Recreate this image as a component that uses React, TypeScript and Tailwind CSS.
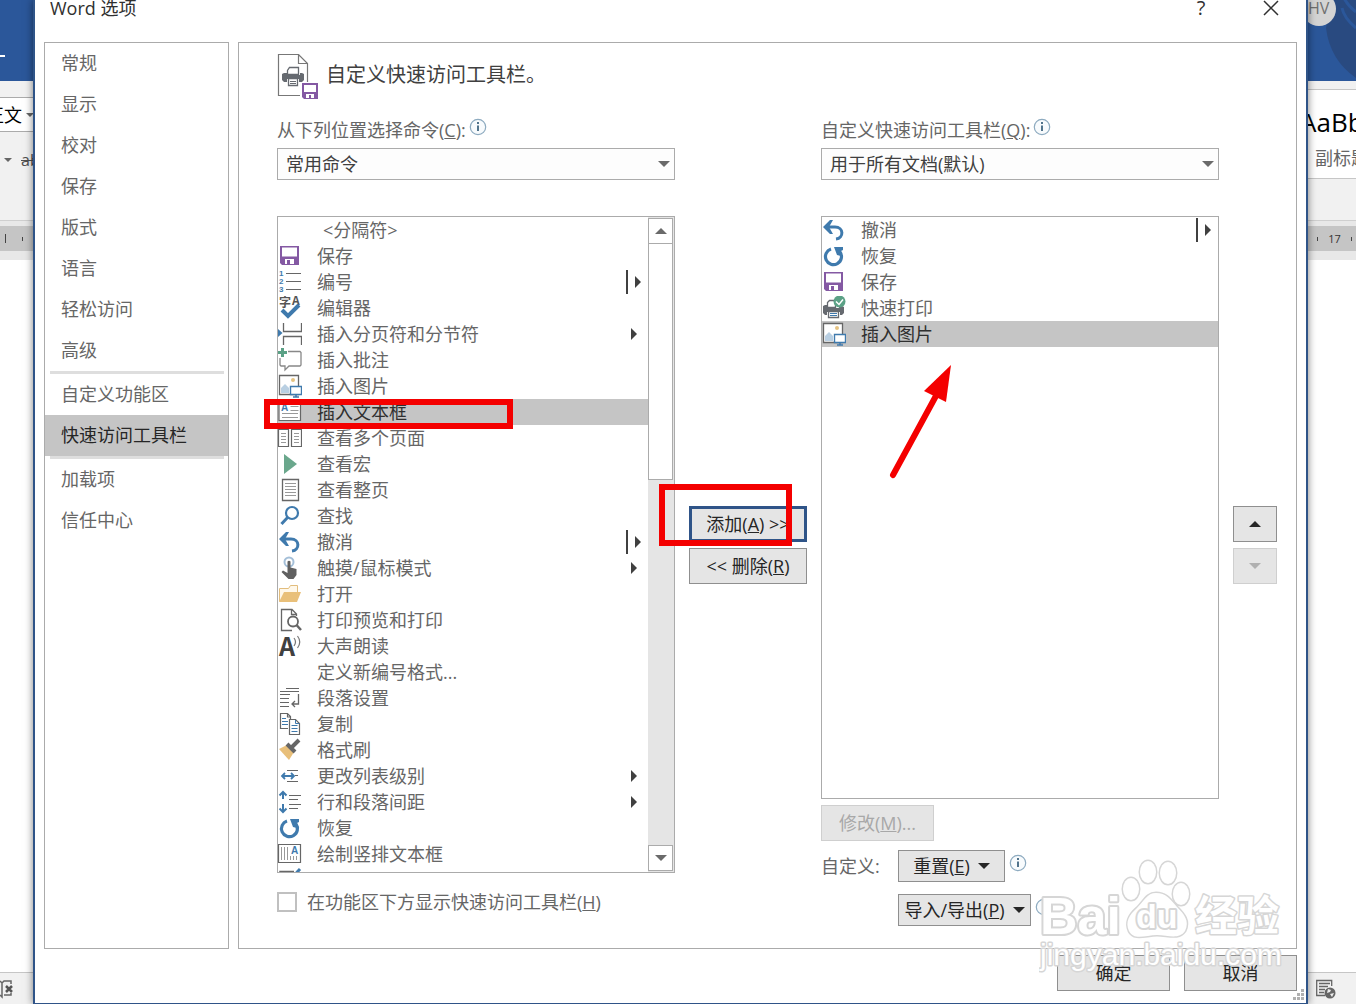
import type { ReactNode } from 'react';

const NAV_GROUPS = [
  ['常规', '显示', '校对', '保存', '版式', '语言', '轻松访问', '高级'],
  ['自定义功能区', '快速访问工具栏'],
  ['加载项', '信任中心'],
];

type Expander = 'split' | 'menu';

interface Command {
  label: string;
  icon?: ReactNode;
  expander?: Expander;
  selected?: boolean;
  separator?: boolean;
}

const GRAY = '#666';
const BLUE = '#3f7aad';

function Icon({ children }: { children?: ReactNode }) {
  return (
    <svg className="w-6 h-6 shrink-0" viewBox="0 0 24 24" fill="none" aria-hidden="true">
      {children}
    </svg>
  );
}

const saveIcon = (
  <Icon>
    <path fill="#8459a3" fillRule="evenodd" d="M2 2h19v19H4l-2-2zM4 3.500v9h15v-9zM7 15v5h2v-4h3v4h4v-5z" />
  </Icon>
);

const undoIcon = (
  <Icon>
    <path stroke={BLUE} strokeWidth="3" d="M4 9h9c9 0 9 11 1 12" />
    <path fill={BLUE} d="M1 9l7-7h3L7 9l4 7H8z" />
  </Icon>
);

const redoIcon = (
  <Icon>
    <path stroke={BLUE} strokeWidth="3.2" d="M9 5a8 8 0 1 0 9 3" />
    <path fill={BLUE} d="M12 3h9v3l-2 1v5l-4-1z" />
  </Icon>
);

const pictureIcon = (
  <Icon>
    <path fill="#fff" stroke={GRAY} strokeWidth="1.3" d="M1.5 1.5h19v19h-19z" />
    <circle cx="15" cy="6" r="2" fill="#e6c382" />
    <path fill="#b9cfe2" d="M3 19v-5l4-4 4 4v5z" />
    <path fill="#fff" stroke={BLUE} strokeWidth="1.4" d="M12.500 12.500h11v8h-11z" />
    <path stroke={BLUE} strokeWidth="1.500" d="M18 20v3M15 23h6" />
  </Icon>
);

const printIcon = (
  <Icon>
    <path fill="#666a70" d="M1 10l2-1h2v3h12v-2h3l2 1v6l-2 2h-2v-3H5v3H3l-2-2z" />
    <path fill="#fff" stroke="#666a70" strokeWidth="1.300" d="M5.500 11.500v-5l2-2h6v7z" />
    <path fill="#fff" stroke="#666a70" strokeWidth="1.300" d="M6.500 15.500h10v6h-10z" />
    <path stroke={BLUE} d="M8 17.500h7M8 19.500h7" />
    <circle cx="17.500" cy="5.500" r="6" fill="#5ba186" />
    <path stroke="#fff" strokeWidth="1.500" d="M14 5.500l3 3 4-5" />
  </Icon>
);

const COMMANDS: Command[] = [
  { label: '<分隔符>', separator: true },
  { label: '保存', icon: saveIcon },
  {
    label: '编号',
    expander: 'split',
    icon: (
      <Icon>
        <g fill={BLUE} fontFamily="Liberation Sans" fontSize="8" fontWeight="bold">
          <text x="1" y="6">1</text>
          <text x="1" y="14">2</text>
          <text x="1" y="22">3</text>
        </g>
        <path stroke={GRAY} strokeWidth="1.200" d="M8 3.500h15M8 11.500h15M8 19.500h15" />
      </Icon>
    ),
  },
  {
    label: '编辑器',
    icon: (
      <Icon>
        <g fill="#555" fontFamily="Noto Sans CJK SC" fontWeight="bold">
          <text x="1" y="11" fontSize="12">字</text>
          <text x="14" y="9" fontSize="12">A</text>
        </g>
        <path stroke={BLUE} strokeWidth="4" d="M4 14l6 6 11-11" />
      </Icon>
    ),
  },
  {
    label: '插入分页符和分节符',
    expander: 'menu',
    icon: (
      <Icon>
        <path stroke={GRAY} strokeWidth="1.300" d="M5.500 1v8.500h18V1M5.500 23v-8.500h18V23" />
        <path fill={BLUE} d="M0 7l4.500 4L0 15z" />
      </Icon>
    ),
  },
  {
    label: '插入批注',
    icon: (
      <Icon>
        <path stroke="#888" strokeWidth="1.300" d="M10 3.500h12l1 1V17l-1 1H11l-4 4v-4H3l-1-1v-7" />
        <path stroke="#5ba186" strokeWidth="3" d="M0 4.500h9M4.500 0v9" />
      </Icon>
    ),
  },
  { label: '插入图片', icon: pictureIcon },
  {
    label: '插入文本框',
    selected: true,
    icon: (
      <Icon>
        <path fill="#fff" stroke={GRAY} strokeWidth="1.200" d="M1 2.500h21.500v18H1z" />
        <text x="3" y="11" fill={BLUE} fontFamily="Liberation Sans" fontWeight="bold" fontSize="10">A</text>
        <path stroke="#999" d="M12.500 6.500h8M12.500 10.500h8M4 13.500h16M4 17.500h16" />
      </Icon>
    ),
  },
  {
    label: '查看多个页面',
    icon: (
      <Icon>
        <path stroke={GRAY} strokeWidth="1.200" d="M.5 3.500h10v17H.5zM13.500 3.500h10v17h-10z" />
        <path stroke="#999" d="M3 7.500h5M3 10.500h5M3 13.500h5M3 16.500h5M16 7.500h5M16 10.500h5M16 13.500h5M16 16.500h5" />
      </Icon>
    ),
  },
  { label: '查看宏', icon: <Icon><path fill="#6aa78c" d="M6 2l13 10L6 22z" /></Icon> },
  {
    label: '查看整页',
    icon: (
      <Icon>
        <path stroke={GRAY} strokeWidth="1.300" d="M4.500 1.500h16v21h-16z" />
        <path stroke="#999" d="M7 5.500h11M7 8.500h11M7 11.500h11M7 14.500h11M7 17.500h11" />
      </Icon>
    ),
  },
  {
    label: '查找',
    icon: (
      <Icon>
        <circle cx="14" cy="9" r="6" stroke={BLUE} strokeWidth="2.200" />
        <path stroke={BLUE} strokeWidth="3" d="M10 13l-6.500 7" />
      </Icon>
    ),
  },
  { label: '撤消', icon: undoIcon, expander: 'split' },
  {
    label: '触摸/鼠标模式',
    expander: 'menu',
    icon: (
      <Icon>
        <circle cx="11" cy="6" r="4.500" stroke="#a4bfd8" strokeWidth="2" />
        <path fill="#606060" d="M9.500 5.500q1.500-1.500 3 0v6l6 1.500V19l-3 4h-5l-7-7 1.500-1.500 4.500 2.500z" />
      </Icon>
    ),
  },
  {
    label: '打开',
    icon: (
      <Icon>
        <path fill="#fff8ea" stroke="#e2bd7d" d="M1.500 19.500V6.500h9l2-3h7v8" />
        <path fill="#e9c07a" d="M1 20l5-10h17l-4 10z" />
      </Icon>
    ),
  },
  {
    label: '打印预览和打印',
    icon: (
      <Icon>
        <path stroke={GRAY} strokeWidth="1.300" d="M14 22.500H3.500v-21H14L18.500 6v2M13.500 1.500V6.500h5" />
        <circle cx="15" cy="13.500" r="5" fill="#fff" stroke={GRAY} strokeWidth="1.800" />
        <path stroke={GRAY} strokeWidth="2.500" d="M18.500 17l4.500 5" />
      </Icon>
    ),
  },
  {
    label: '大声朗读',
    icon: (
      <Icon>
        <text x="1" y="22" fill="#404040" fontFamily="Noto Sans CJK SC" fontWeight="bold" fontSize="25">A</text>
        <path stroke="#777" strokeWidth="1.200" d="M16 4q3 4 0 8M19.500 2q4.500 6 0 12" />
      </Icon>
    ),
  },
  { label: '定义新编号格式...', icon: <Icon /> },
  {
    label: '段落设置',
    icon: (
      <Icon>
        <path stroke={GRAY} strokeWidth="1.200" d="M8 2.500h13M2 5.500h19M2 8.500h10M2 12.500h9M2 16.500h9M2 20.500h9" />
        <path stroke={GRAY} strokeWidth="1.300" d="M20.500 8v10H14M17 15l-3 3 3 3" />
      </Icon>
    ),
  },
  {
    label: '复制',
    icon: (
      <Icon>
        <path stroke={GRAY} strokeWidth="1.200" d="M10 16.500H2.500v-15h7l3 3V7M9.500 2v3h3" />
        <path fill="#fff" stroke={GRAY} strokeWidth="1.200" d="M11.500 7.500h6l4 4v11h-10z" />
        <path stroke={BLUE} d="M4 6.500h4M4 9.500h6M4 12.500h6M13.500 13.500h6M13.500 16.500h6M13.500 19.500h6M17.500 8v3.500h4" />
      </Icon>
    ),
  },
  {
    label: '格式刷',
    icon: (
      <Icon>
        <path fill="#e8bf7a" d="M1 11l8-4 7 7-5 8z" />
        <path stroke="#666" strokeWidth="4" d="M9 6l8 8M14 9l7-7" />
      </Icon>
    ),
  },
  {
    label: '更改列表级别',
    expander: 'menu',
    icon: (
      <Icon>
        <path stroke={GRAY} strokeWidth="1.200" d="M9 6.500h11M17 11.500h3M9 17.500h11" />
        <path stroke={BLUE} strokeWidth="1.800" d="M4 12h12M7 9l-3 3 3 3M13 9l3 3-3 3" />
      </Icon>
    ),
  },
  {
    label: '行和段落间距',
    expander: 'menu',
    icon: (
      <Icon>
        <path stroke={GRAY} strokeWidth="1.200" d="M11 5.500h12M11 9.500h9M11 14.500h12M11 18.500h9" />
        <path stroke={BLUE} strokeWidth="2" d="M5 2v7M5 14v8M1.500 5.500L5 2l3.500 3.500M1.500 18.500L5 22l3.500-3.500" />
      </Icon>
    ),
  },
  { label: '恢复', icon: redoIcon },
  {
    label: '绘制竖排文本框',
    icon: (
      <Icon>
        <path stroke={GRAY} strokeWidth="1.200" d="M.5 2.500h22v18H.5z" />
        <path stroke="#999" d="M3.500 5v13M6.500 5v13M9.500 5v13M12.500 14v4M15.500 14v4M18.500 14v4" />
        <text x="13" y="12" fill={BLUE} fontFamily="Liberation Sans" fontWeight="bold" fontSize="10">A</text>
      </Icon>
    ),
  },
  {
    label: '',
    icon: (
      <Icon>
        <path stroke={GRAY} strokeWidth="1.500" d="M2 21V3.500h14" />
        <path stroke={BLUE} strokeWidth="3" d="M12 12L22 1" />
      </Icon>
    ),
  },
];

const TOOLBAR: Command[] = [
  { label: '撤消', icon: undoIcon, expander: 'split' },
  { label: '恢复', icon: redoIcon },
  { label: '保存', icon: saveIcon },
  { label: '快速打印', icon: printIcon },
  { label: '插入图片', icon: pictureIcon, selected: true },
];

function Triangle({ dir, className = 'text-[#262626]' }: { dir: 'up' | 'down' | 'right'; className?: string }) {
  const paths = { up: 'M0 9l6-6 6 6z', down: 'M0 3h12l-6 6z', right: 'M3 0l6 6-6 6z' };
  return (
    <svg className={`w-3 h-3 shrink-0 ${className}`} viewBox="0 0 12 12" fill="currentColor" aria-hidden="true">
      <path d={paths[dir]} />
    </svg>
  );
}

function InfoIcon() {
  return (
    <svg className="w-[18px] h-[18px] shrink-0" viewBox="0 0 18 18" fill="none" aria-hidden="true">
      <circle cx="9" cy="9" r="7.700" fill="#f8fbfd" stroke="#8eabc0" strokeWidth="1.200" />
      <path stroke="#3f6580" strokeWidth="1.800" d="M9 7.500V13M9 4v2" />
    </svg>
  );
}

function CommandRow({ command }: { command: Command }) {
  const { label, icon, expander, selected, separator } = command;
  return (
    <li
      role="option"
      aria-selected={!!selected}
      className={`flex items-center h-[26px] ${expander === 'split' ? 'pr-1' : 'pr-2'} ${selected ? 'bg-[#c5c5c5] text-[#303030]' : ''}`}
    >
      {icon}
      <span className={`flex-1 whitespace-nowrap ${separator ? 'pl-[45px]' : 'pl-[15px]'}`}>{label}</span>
      {expander === 'split' && <span className="w-[2px] h-6 bg-[#404040] mr-1" />}
      {expander && <Triangle dir="right" className="text-[#404040]" />}
    </li>
  );
}

function PickerField({ id, label, hotkey, value }: { id: string; label: string; hotkey: string; value: string }) {
  return (
    <div>
      <div className="flex gap-[3px] h-7 pt-[2px]">
        <label htmlFor={id} className="whitespace-nowrap">{label}(<u>{hotkey}</u>):</label>
        <InfoIcon />
      </div>
      <div className="relative mt-1">
        <select
          id={id}
          className="appearance-none block w-full h-8 pl-2 pr-8 border border-[#ababab] bg-[#fdfdfd] text-[#404040] leading-7"
        >
          <option>{value}</option>
        </select>
        <span className="absolute right-[5px] top-[10px] pointer-events-none">
          <Triangle dir="down" className="text-[#6a6a6a]" />
        </span>
      </div>
    </div>
  );
}

const BUTTON = 'flex items-center justify-center border border-[#8f8f8f] bg-[#e5e5e5] text-[#262626] whitespace-nowrap';
const BUTTON_DISABLED = 'flex items-center justify-center border border-[#cfcfcf] bg-[#e5e5e5] text-[#a8a8a8] whitespace-nowrap';

function LeftBackdrop() {
  return (
    <div className="w-[33px] shrink-0 flex flex-col overflow-hidden bg-white" aria-hidden="true">
      <div className="h-[81px] bg-[#2b579a] pt-[55px]">
        <div className="w-[5px] h-[2px] bg-white" />
      </div>
      <div className="h-[139px] bg-[#f1f1f1] pt-4">
        <div className="h-[35px] border-y border-[#ababab] bg-white flex items-center justify-end text-black whitespace-nowrap">
          正文
          <svg className="w-[11px] h-2 shrink-0" viewBox="0 0 11 8"><path fill="#666" d="M4 2h7v1L8 6z" /></svg>
        </div>
        <div className="flex items-center gap-[9px] pt-4 pl-1 whitespace-nowrap">
          <svg className="w-2 h-2 shrink-0" viewBox="0 0 8 8"><path fill="#666" d="M0 2h8L4 6z" /></svg>
          <s className="text-[16px] text-[#505050]">abc</s>
        </div>
      </div>
      <div className="h-[6px] bg-[#e8e8e8] border-t border-[#cfcfcf]" />
      <div className="h-[25px] bg-[#c5c5c5] flex items-center gap-4 pl-[5px]">
        <span className="w-px h-[9px] bg-[#444]" />
        <span className="w-px h-1 bg-[#444]" />
      </div>
      <div className="h-[9px] bg-[#e8e8e8]" />
      <div className="flex-1" />
      <div className="h-8 bg-[#f1f1f1] border-t border-[#c6c6c6] pt-[6px]">
        <svg className="w-4 h-5" viewBox="0 0 16 20" fill="none">
          <path stroke="#666" strokeWidth="1.500" d="M0 2l2 2v14l-2-2M2 4l2-2h7v3M4 16h7v-2" />
          <path stroke="#555" strokeWidth="2.500" d="M6 7l6 6M12 7l-6 6" />
        </svg>
      </div>
    </div>
  );
}

function RightBackdrop() {
  return (
    <div className="w-12 shrink-0 flex flex-col overflow-hidden bg-white" aria-hidden="true">
      <svg className="w-12 h-[81px] shrink-0" viewBox="0 0 48 81">
        <path fill="#2b579a" d="M0 0h48v81H0z" />
        <path fill="#294a80" d="M18 28q4 32 30 50V0H24z" />
        <path stroke="#2b579a" strokeWidth="3" fill="none" d="M34 8q2 10 14 20M36-2q4 8 12 14" />
        <circle cx="11" cy="9" r="17" fill="#d4d4d4" />
        <text x="0" y="14" fontFamily="Open Sans" fontSize="16" fill="#707070">HV</text>
      </svg>
      <div className="h-[9px] bg-[#f1f1f1] border-b border-[#c6c6c6]" />
      <div className="h-[89px] border-b border-[#c6c6c6] pt-4 whitespace-nowrap">
        <div className="-ml-2 text-[26px] leading-8 text-black">AaBbC</div>
        <div className="pl-[7px] leading-10">副标题</div>
      </div>
      <div className="h-[41px] bg-[#f1f1f1]" />
      <div className="h-[6px] bg-[#e8e8e8] border-t border-[#cfcfcf]" />
      <div className="h-[25px] bg-[#c5c5c5] flex items-center justify-between pl-[9px] pr-1 text-[11px] text-[#333]">
        <span className="w-px h-1 bg-[#444]" />
        17
        <span className="w-px h-1 bg-[#444]" />
      </div>
      <div className="h-[9px] bg-[#e8e8e8]" />
      <div className="flex-1" />
      <div className="h-8 bg-[#f1f1f1] border-t border-[#c6c6c6] pt-[6px] pl-2">
        <svg className="w-5 h-5" viewBox="0 0 20 20" fill="none">
          <path stroke="#666" strokeWidth="1.300" d="M9 16.500H.7v-15h15V7M3 4.500h11M3 7.500h9M3 10.500h6M3 13.500h5" />
          <circle cx="14" cy="14" r="5.500" fill="#666" />
          <path fill="#eee" d="M12 10l3 1-1 2-3 1zM14 15l4-1-2 4z" />
        </svg>
      </div>
    </div>
  );
}

function Watermark() {
  return (
    <svg className="absolute right-[7px] bottom-[-28px] w-[250px] h-[120px] pointer-events-none" viewBox="0 0 250 120" aria-hidden="true">
      <g fill="#fff" stroke="#d6d6d6" strokeWidth="4" strokeLinejoin="round" paintOrder="stroke">
        <text x="1" y="78" fontFamily="Liberation Sans" fontWeight="bold" fontSize="52">Bai</text>
        <ellipse cx="92" cy="33" rx="8" ry="11" strokeWidth="3" />
        <ellipse cx="109" cy="16" rx="8" ry="11" strokeWidth="3" />
        <ellipse cx="129" cy="17" rx="8" ry="11" strokeWidth="3" />
        <ellipse cx="142" cy="38" rx="8" ry="11" strokeWidth="3" />
        <path strokeWidth="3" d="M117 37c-9 0-12 8-19 15-8 7-12 14-8 23 5 10 17 4 28 4s22 5 28-4c5-10-1-17-8-24-7-8-11-14-21-14z" />
        <text x="97" y="72" fontFamily="Liberation Sans" fontWeight="bold" fontSize="34">du</text>
        <text x="156" y="75" fontFamily="Noto Sans CJK SC" fontWeight="bold" fontSize="42" strokeWidth="3">经验</text>
        <text x="1" y="109" fontFamily="Liberation Sans" fontSize="30" strokeWidth="3">jingyan.baidu.com</text>
      </g>
    </svg>
  );
}

export default function App() {
  return (
    <div className="flex min-h-screen overflow-hidden bg-white font-['Open_Sans','Noto_Sans_CJK_SC',sans-serif] text-[18px] leading-6 text-[#666]">
      <LeftBackdrop />

      <div className="relative flex-1 flex flex-col border-x-2 border-b border-[#2f5488] bg-white px-[9px] shadow-[0_0_8px_rgba(0,0,0,0.5)]">
        <header className="flex items-start justify-between h-[42px] pl-[6px] pr-4 text-[#303030]">
          <h1 className="leading-4">Word 选项</h1>
          <div className="flex gap-[52px]">
            <button type="button" aria-label="帮助" className="h-4 w-5 text-[20px] leading-4">?</button>
            <button type="button" aria-label="关闭" className="w-[18px] h-[18px]">
              <svg viewBox="0 0 18 18" fill="none" stroke="#303030" strokeWidth="1.500">
                <path d="M1 1l14 14M15 1L1 15" />
              </svg>
            </button>
          </div>
        </header>

        <div className="flex flex-1 gap-[9px]">
          <nav className="w-[185px] shrink-0 border border-[#ababab]">
            {NAV_GROUPS.map((group, i) => (
              <div key={i}>
                {i > 0 && <hr className="ml-[5px] mr-1 h-[3px] border-0 bg-[#dedede]" />}
                {group.map(item => (
                  <button
                    key={item}
                    type="button"
                    className={`block w-full h-[41px] pl-4 pb-[2px] text-left ${item === '快速访问工具栏' ? 'bg-[#c5c5c5] text-[#262626]' : ''}`}
                  >
                    {item}
                  </button>
                ))}
              </div>
            ))}
          </nav>

          <main className="relative flex-1 border border-[#ababab] pl-[38px] pr-[19px] pt-[11px]">
            <div className="flex items-center gap-2 h-[46px]">
              <svg className="w-[41px] h-[46px]" viewBox="0 0 41 46" fill="none" aria-hidden="true">
                <path stroke="#777" strokeWidth="1.200" d="M23 41.500H1.500V.5h20l9 9V28M21.500.5v9h9" />
                <path fill="#666a70" d="M5 20l2-1h3v2h13v-2h2l2 1v6l-2 2h-3v-3H10v3H7l-2-2z" />
                <path fill="#fff" stroke="#666a70" strokeWidth="1.300" d="M10.500 20.500v-4l2-3h9v7zM11.500 24.500h9v7h-9z" />
                <path stroke="#666a70" d="M13 27.500h6M13 29.500h6" />
                <path fill="#8459a3" fillRule="evenodd" d="M25 29h16v16H27l-2-2zM27 31v7h12v-7zM29 40v4h3v-3h2v3h3v-4z" />
              </svg>
              <h2 className="text-[20px] text-[#404040] pb-1">自定义快速访问工具栏。</h2>
            </div>

            <div className="grid grid-cols-[minmax(0,1fr)_118px_minmax(0,1fr)_44px] gap-x-[14px] pt-4">
              <PickerField id="source" label="从下列位置选择命令" hotkey="C" value="常用命令" />
              <div />
              <PickerField id="target" label="自定义快速访问工具栏" hotkey="Q" value="用于所有文档(默认)" />
              <div />

              <div className="relative pt-9">
                <div className="flex h-[657px] border border-[#ababab] overflow-hidden">
                  <ul role="listbox" aria-label="常用命令" className="flex-1">
                    {COMMANDS.map(command => <CommandRow key={command.label} command={command} />)}
                  </ul>
                  <div className="w-[26px] flex flex-col bg-[#e5e5e5] py-px pr-px">
                    <button type="button" aria-label="向上滚动" className="flex items-center justify-center h-[26px] border border-[#ababab] bg-white">
                      <Triangle dir="up" className="text-[#6a6a6a]" />
                    </button>
                    <div className="h-[236px] border border-t-0 border-[#ababab] bg-white" />
                    <div className="flex-1" />
                    <button type="button" aria-label="向下滚动" className="flex items-center justify-center h-[26px] border border-[#ababab] bg-white">
                      <Triangle dir="down" className="text-[#6a6a6a]" />
                    </button>
                  </div>
                </div>
                <label className="flex items-center gap-[10px] pt-[17px] whitespace-nowrap">
                  <input type="checkbox" className="appearance-none w-5 h-5 border-2 border-[#c0c0c0] bg-white" />
                  <span>在功能区下方显示快速访问工具栏(<u>H</u>)</span>
                </label>
                <div className="absolute left-[-13px] top-[219px] w-[249px] h-[30px] border-[6px] border-[#f40000] pointer-events-none" />
              </div>

              <div className="mt-9 h-[657px] flex flex-col justify-center gap-[6px]">
                <div className="relative">
                  <button type="button" className="flex items-center justify-center w-full h-9 border-[3px] border-[#2f5488] bg-[#e5e5e5] text-[#262626]">
                    <span>添加(<u>A</u>) &gt;&gt;</span>
                  </button>
                  <div className="absolute left-[-30px] top-[-22px] w-[133px] h-[62px] border-[6px] border-[#f40000] pointer-events-none" />
                </div>
                <button type="button" className={`${BUTTON} h-9`}>
                  <span>&lt;&lt; 删除(<u>R</u>)</span>
                </button>
              </div>

              <div className="pt-9">
                <div className="relative h-[583px] border border-[#ababab]">
                  <ul role="listbox" aria-label="快速访问工具栏">
                    {TOOLBAR.map(command => <CommandRow key={command.label} command={command} />)}
                  </ul>
                  <svg className="absolute left-[66px] top-[146px] w-16 h-[118px] pointer-events-none" viewBox="0 0 64 118" aria-hidden="true">
                    <path stroke="#f40000" strokeWidth="6" strokeLinecap="round" d="M5 112L49 31" />
                    <path fill="#f40000" d="M63 2L36 28l22 11z" />
                  </svg>
                </div>
                <button type="button" disabled className={`${BUTTON_DISABLED} w-[113px] h-9 mt-[6px]`}>
                  <span>修改(<u>M</u>)...</span>
                </button>
                <div className="grid grid-cols-[77px_1fr] gap-y-3 pt-[9px]">
                  <span className="self-center">自定义:</span>
                  <div className="flex gap-1">
                    <button type="button" className={`${BUTTON} w-[107px] h-8 gap-2`}>
                      <span>重置(<u>E</u>)</span>
                      <Triangle dir="down" />
                    </button>
                    <div className="pt-1"><InfoIcon /></div>
                  </div>
                  <div className="col-start-2 flex gap-1">
                    <button type="button" className={`${BUTTON} w-[133px] h-8 gap-2`}>
                      <span>导入/导出(<u>P</u>)</span>
                      <Triangle dir="down" />
                    </button>
                    <div className="pt-1"><InfoIcon /></div>
                  </div>
                </div>
              </div>

              <div className="mt-9 h-[657px] flex flex-col justify-center gap-[6px]">
                <button type="button" aria-label="上移" className={`${BUTTON} h-9`}>
                  <Triangle dir="up" />
                </button>
                <button type="button" disabled aria-label="下移" className={`${BUTTON_DISABLED} h-9`}>
                  <Triangle dir="down" className="text-[#b0b0b0]" />
                </button>
              </div>
            </div>
            <Watermark />
          </main>
        </div>

        <footer className="flex justify-end gap-[14px] pt-[6px] pb-3">
          <button type="button" className={`${BUTTON} w-[113px] h-9`}>确定</button>
          <button type="button" className={`${BUTTON} w-[113px] h-9`}>取消</button>
        </footer>
        <svg className="absolute right-[2px] bottom-[2px] w-3 h-3" viewBox="0 0 12 12" fill="#b0b0b0" aria-hidden="true">
          <path d="M9 0h3v3H9zM5 4h3v3H5zM9 4h3v3H9zM1 8h3v3H1zM5 8h3v3H5zM9 8h3v3H9z" />
        </svg>
      </div>

      <RightBackdrop />
    </div>
  );
}
